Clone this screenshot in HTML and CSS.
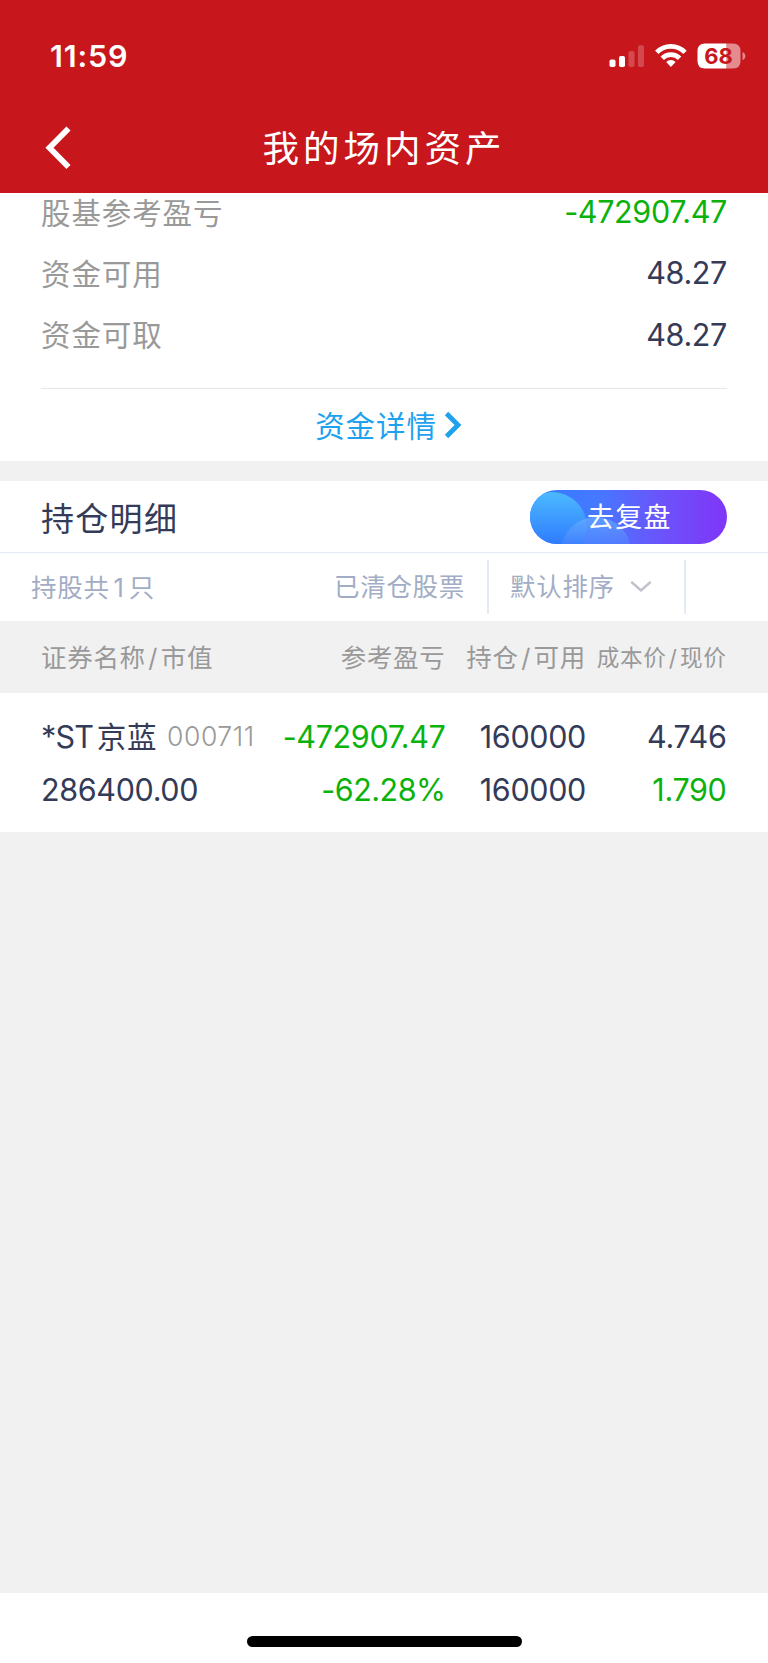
FILE: index.html
```html
<!DOCTYPE html>
<html lang="zh-CN">
<head>
<meta charset="utf-8">
<title>我的场内资产</title>
<link rel="stylesheet" href="styles.css">
</head>
<body>
<div class="app">
  <header class="header">
    <div class="status">
      <span class="status-time">11:59</span>
      <svg class="status-icons" width="138" height="27" viewBox="0 0 138 27">
        <g fill="#fff">
          <rect x="0.5" y="16.5" width="6" height="7.5" rx="1.8"/>
          <rect x="10" y="13" width="6" height="11" rx="1.8"/>
          <rect x="19.5" y="8" width="6" height="16" rx="1.8" opacity=".22"/>
          <rect x="29" y="2.300" width="6" height="21.700" rx="1.800" opacity=".22"/>
        </g>
        <g fill="none" stroke="#fff" stroke-width="4.800">
          <path d="M47.800 9.400a19.700 19.700 0 0 1 28.200 0"/>
          <path d="M53.200 15.200a12.300 12.300 0 0 1 17.400 0"/>
        </g>
        <path fill="#fff" d="M57.200 18.900a7 7 0 0 1 9.400 0L61.900 24z"/>
        <path fill="#fff" d="M96 .5H117.500V25.500H96Q88.500 25.500 88.500 18V8Q88.500 .5 96 .5Z"/>
        <path fill="#fff" opacity=".5" d="M117.500 .5H124Q131.500 .5 131.500 8V18Q131.500 25.500 124 25.500H117.500ZM133.500 9Q136.300 10 136.300 13Q136.300 16 133.500 17Z"/>
        <text class="battery-text" x="109.500" y="21" text-anchor="middle">68</text>
      </svg>
    </div>
    <div class="navbar">
      <svg class="back" width="28" height="46" viewBox="0 0 28 46"><path d="M23.500 3.500L4.500 22.800L23.500 42" fill="none" stroke="#fff" stroke-width="5.800"/></svg>
      <h1 class="page-title">我的场内资产</h1>
    </div>
  </header>

  <section class="funds">
    <div class="fund-row"><span class="label">股基参考盈亏</span><span class="num down">-472907.47</span></div>
    <div class="fund-row"><span class="label">资金可用</span><span class="num">48.27</span></div>
    <div class="fund-row"><span class="label">资金可取</span><span class="num">48.27</span></div>
    <a class="fund-link"><span class="link-text">资金详情</span><svg width="18" height="28" viewBox="0 0 18 28"><path d="M2.500 2.500L14 14L2.500 25.500" fill="none" stroke="#1fa2ee" stroke-width="4.800"/></svg></a>
  </section>

  <section class="positions">
    <div class="section-head">
      <h2 class="section-title">持仓明细</h2>
      <div class="review">
        <svg class="review-bg" viewBox="0 0 197 54">
          <defs>
            <linearGradient id="base" x1="0" x2="1"><stop offset="0" stop-color="#327bff"/><stop offset=".35" stop-color="#4678ff"/><stop offset=".65" stop-color="#6a55fb"/><stop offset="1" stop-color="#8035f8"/></linearGradient>
            <linearGradient id="left" x1="0" y1="0" x2="0" y2="1"><stop offset="0" stop-color="#4cb9ff"/><stop offset=".75" stop-color="#2f7cff"/></linearGradient>
            <linearGradient id="mid" x1="0" y1="0" x2="0" y2="1"><stop offset="0" stop-color="#6cb2ff" stop-opacity=".65"/><stop offset=".4" stop-color="#5488ff" stop-opacity=".45"/></linearGradient>
          </defs>
          <rect width="197" height="54" fill="url(#base)"/>
          <circle cx="22" cy="37" r="35" fill="url(#left)"/>
          <circle cx="66" cy="62" r="35" fill="url(#mid)"/>
        </svg>
        <span class="review-text">去复盘</span>
      </div>
    </div>
    <div class="filters">
      <span class="count">持股共<i class="one">1</i>只</span>
      <span class="cleared">已清仓股票</span>
      <span class="sort">默认排序<svg width="22" height="14" viewBox="0 0 22 14"><path d="M2 2.500L11 10.500L20 2.500" fill="none" stroke="#c1c1ca" stroke-width="2.400" stroke-linecap="round"/></svg></span>
    </div>
    <div class="grid table-head">
      <span>证券名称<i class="slash">/</i>市值</span>
      <span class="right">参考盈亏</span>
      <span class="right">持仓<i class="slash">/</i>可用</span>
      <span class="right small">成本价<i class="slash">/</i>现价</span>
    </div>
    <div class="holding">
      <div class="grid line">
        <span class="name"><span class="num st">*ST</span><span class="cjk">京蓝</span><span class="code">000711</span></span>
        <span class="num right down">-472907.47</span>
        <span class="num right">160000</span>
        <span class="num right">4.746</span>
      </div>
      <div class="grid line">
        <span class="num">286400.00</span>
        <span class="num right down percent">-62.28%</span>
        <span class="num right">160000</span>
        <span class="num right down">1.790</span>
      </div>
    </div>
  </section>
  <footer class="home"><div class="home-bar"></div></footer>
</div>
</body>
</html>
```

FILE: styles.css
```css
* { box-sizing: border-box; }
body { margin: 0; background: #f1f1f1; font-family: Inter, "Noto Sans CJK SC", sans-serif; color: #343b58; }
h1, h2 { margin: 0; font-weight: 400; }
i { font-style: normal; }
.app { width: 768px; height: 1663px; display: flex; flex-direction: column; overflow: hidden; white-space: nowrap; }

.header { height: 192.5px; flex: none; background: #c7161c; color: #fff; }
.status { height: 102px; padding: 10px 21.5px 0 50px; display: flex; justify-content: space-between; align-items: center; }
.status-time { font-size: 30.5px; font-weight: 600; line-height: 36px; letter-spacing: .8px; }
.status-icons { display: block; }
.battery-text { font: 700 22px Inter, sans-serif; fill: #c7161c; }
.navbar { height: 90px; display: grid; grid-template-columns: 100px 1fr 100px; align-items: center; }
.back { margin: 2px 0 0 44.5px; }
.page-title { font-size: 36.5px; line-height: 50px; letter-spacing: 4px; text-align: center; padding-top: 4px; }

.funds { height: 268.5px; flex: none; background: #fff; padding: 0 41px; }
.fund-row { height: 61.5px; display: flex; justify-content: space-between; align-items: center; }
.fund-row:first-child { height: 50px; padding-bottom: 11px; }
.label { font-size: 29.5px; line-height: 40px; letter-spacing: .9px; color: #999; padding-top: 1px; }
.num { font-size: 30.5px; line-height: 36px; letter-spacing: -.35px; }
.down { color: #0bb20c; }
.fund-link { margin-top: 22px; height: 73px; border-top: 1px solid #e6e6e6; display: flex; justify-content: center; align-items: center; gap: 7px; padding-left: 9px; font-size: 29.5px; letter-spacing: .9px; color: #1fa2ee; }
.link-text { padding-bottom: 2px; }

.positions { margin-top: 20px; flex: none; background: #fff; }
.section-head { height: 72px; border-bottom: 1px solid #e3eaf2; padding: 0 41px; display: flex; justify-content: space-between; align-items: center; }
.section-title { font-size: 33px; line-height: 44px; letter-spacing: 1.3px; padding-top: 4px; }
.review { width: 197px; height: 54px; border-radius: 27px; overflow: hidden; display: grid; }
.review-bg, .review-text { grid-area: 1 / 1; }
.review-bg { width: 197px; height: 54px; }
.review-text { color: #fff; font-size: 27px; line-height: 52px; letter-spacing: 1.3px; padding: 2px 0 0 57px; height: 54px; z-index: 1; }
.filters { height: 68px; display: grid; grid-template-columns: 235px 254px 197px 1fr; align-items: center; font-size: 25.5px; letter-spacing: .7px; color: #a2adc5; }
.count { padding: 0 0 4px 31px; }
.one { padding: 0 4px; }
.cleared, .sort { height: 54px; line-height: 52px; border-right: 2px solid #e3eaf2; }
.cleared { padding: 1px 22px 0 0; text-align: right; }
.sort { padding: 0 0 0 21px; display: flex; align-items: center; }
.sort svg { margin-left: 15px; }

.grid { display: grid; grid-template-columns: 215px 189.500px 140.500px 140.500px; padding: 0 41px; align-items: center; }
.right { text-align: right; }
.table-head { height: 72px; padding-bottom: 4px; background: #f1f1f1; color: #999; font-size: 25.5px; letter-spacing: .7px; }
.small { font-size: 22.6px; letter-spacing: .6px; padding-top: 2px; }
.slash { padding: 0 2.5px; }
.holding { height: 139px; padding-top: 17px; }
.line { height: 53px; }
.percent { letter-spacing: -.5px; padding-left: 1px; }
.name { display: flex; align-items: center; }
.cjk { font-size: 29.5px; line-height: 40px; letter-spacing: .9px; margin-left: 3.5px; padding-top: 1px; }
.st { letter-spacing: -.8px; }
.code { font-size: 26.5px; font-weight: 300; letter-spacing: .6px; color: #999; margin-left: 9.5px; padding-bottom: 1px; }

.home { margin-top: auto; height: 70px; background: #fff; padding-top: 43px; }
.home-bar { width: 275px; height: 10.5px; margin: 0 auto; border-radius: 6px; background: #000; }
```
